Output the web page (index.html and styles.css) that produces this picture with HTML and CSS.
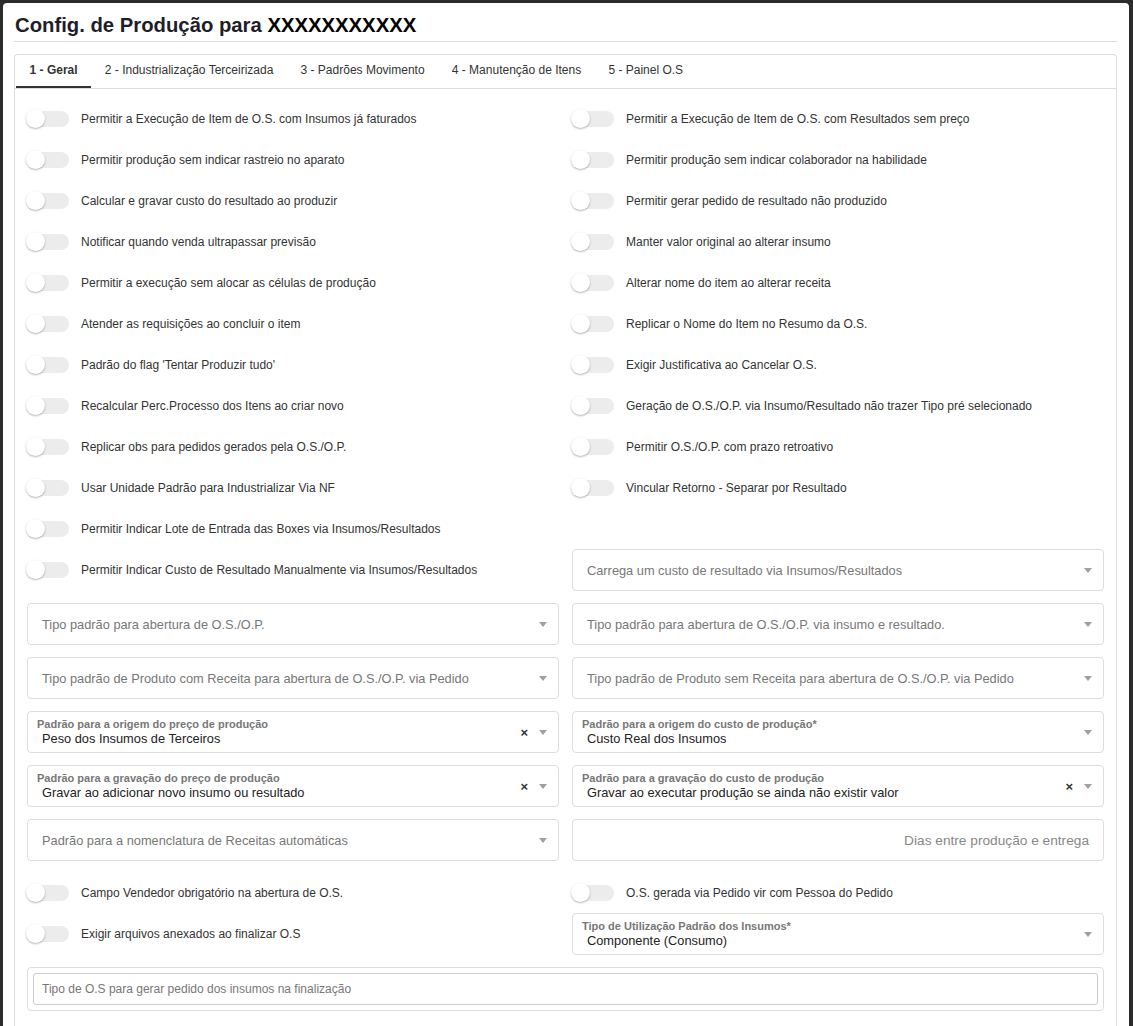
FILE: index.html
```html
<!DOCTYPE html>
<html lang="pt-BR">
<head>
    <meta charset="UTF-8">
    <meta name="viewport" content="width=device-width, initial-scale=1.0">
    <title>Config. de Produção</title>
    <link rel="stylesheet" href="styles.css">
</head>
<body>
    <div class="card">
        <h1 class="page-title">Config. de Produção para <span class="entity">XXXXXXXXXXX</span></h1>

        <div class="tabs">
            <ul class="tab-list">
                <li class="tab active">1 - Geral</li>
                <li class="tab">2 - Industrialização Terceirizada</li>
                <li class="tab">3 - Padrões Movimento</li>
                <li class="tab">4 - Manutenção de Itens</li>
                <li class="tab">5 - Painel O.S</li>
            </ul>

            <div class="tab-body">
                <!-- flags -->
                <div class="grid flags">
                    <label class="switch"><span class="track"></span><span>Permitir a Execução de Item de O.S. com Insumos já faturados</span></label>
                    <label class="switch"><span class="track"></span><span>Permitir a Execução de Item de O.S. com Resultados sem preço</span></label>

                    <label class="switch"><span class="track"></span><span>Permitir produção sem indicar rastreio no aparato</span></label>
                    <label class="switch"><span class="track"></span><span>Permitir produção sem indicar colaborador na habilidade</span></label>

                    <label class="switch"><span class="track"></span><span>Calcular e gravar custo do resultado ao produzir</span></label>
                    <label class="switch"><span class="track"></span><span>Permitir gerar pedido de resultado não produzido</span></label>

                    <label class="switch"><span class="track"></span><span>Notificar quando venda ultrapassar previsão</span></label>
                    <label class="switch"><span class="track"></span><span>Manter valor original ao alterar insumo</span></label>

                    <label class="switch"><span class="track"></span><span>Permitir a execução sem alocar as células de produção</span></label>
                    <label class="switch"><span class="track"></span><span>Alterar nome do item ao alterar receita</span></label>

                    <label class="switch"><span class="track"></span><span>Atender as requisições ao concluir o item</span></label>
                    <label class="switch"><span class="track"></span><span>Replicar o Nome do Item no Resumo da O.S.</span></label>

                    <label class="switch"><span class="track"></span><span>Padrão do flag 'Tentar Produzir tudo'</span></label>
                    <label class="switch"><span class="track"></span><span>Exigir Justificativa ao Cancelar O.S.</span></label>

                    <label class="switch"><span class="track"></span><span>Recalcular Perc.Processo dos Itens ao criar novo</span></label>
                    <label class="switch"><span class="track"></span><span>Geração de O.S./O.P. via Insumo/Resultado não trazer Tipo pré selecionado</span></label>

                    <label class="switch"><span class="track"></span><span>Replicar obs para pedidos gerados pela O.S./O.P.</span></label>
                    <label class="switch"><span class="track"></span><span>Permitir O.S./O.P. com prazo retroativo</span></label>

                    <label class="switch"><span class="track"></span><span>Usar Unidade Padrão para Industrializar Via NF</span></label>
                    <label class="switch"><span class="track"></span><span>Vincular Retorno - Separar por Resultado</span></label>

                    <label class="switch"><span class="track"></span><span>Permitir Indicar Lote de Entrada das Boxes via Insumos/Resultados</span></label>
                    <div></div>

                    <label class="switch"><span class="track"></span><span>Permitir Indicar Custo de Resultado Manualmente via Insumos/Resultados</span></label>
                    <div class="select">
                        <span class="placeholder">Carrega um custo de resultado via Insumos/Resultados</span>
                        <span class="caret"></span>
                    </div>
                </div>

                <!-- selects -->
                <div class="grid selects">
                    <div class="select">
                        <span class="placeholder">Tipo padrão para abertura de O.S./O.P.</span>
                        <span class="caret"></span>
                    </div>
                    <div class="select">
                        <span class="placeholder">Tipo padrão para abertura de O.S./O.P. via insumo e resultado.</span>
                        <span class="caret"></span>
                    </div>

                    <div class="select">
                        <span class="placeholder">Tipo padrão de Produto com Receita para abertura de O.S./O.P. via Pedido</span>
                        <span class="caret"></span>
                    </div>
                    <div class="select">
                        <span class="placeholder">Tipo padrão de Produto sem Receita para abertura de O.S./O.P. via Pedido</span>
                        <span class="caret"></span>
                    </div>

                    <div class="select filled">
                        <div class="value-wrap">
                            <span class="float-label">Padrão para a origem do preço de produção</span>
                            <span class="value">Peso dos Insumos de Terceiros</span>
                        </div>
                        <span class="clear">×</span>
                        <span class="caret"></span>
                    </div>
                    <div class="select filled">
                        <div class="value-wrap">
                            <span class="float-label">Padrão para a origem do custo de produção*</span>
                            <span class="value">Custo Real dos Insumos</span>
                        </div>
                        <span class="caret"></span>
                    </div>

                    <div class="select filled">
                        <div class="value-wrap">
                            <span class="float-label">Padrão para a gravação do preço de produção</span>
                            <span class="value">Gravar ao adicionar novo insumo ou resultado</span>
                        </div>
                        <span class="clear">×</span>
                        <span class="caret"></span>
                    </div>
                    <div class="select filled">
                        <div class="value-wrap">
                            <span class="float-label">Padrão para a gravação do custo de produção</span>
                            <span class="value">Gravar ao executar produção se ainda não existir valor</span>
                        </div>
                        <span class="clear">×</span>
                        <span class="caret"></span>
                    </div>

                    <div class="select">
                        <span class="placeholder">Padrão para a nomenclatura de Receitas automáticas</span>
                        <span class="caret"></span>
                    </div>
                    <div class="input-box">
                        <span class="placeholder">Dias entre produção e entrega</span>
                    </div>
                </div>

                <!-- bottom flags -->
                <div class="grid flags bottom">
                    <label class="switch"><span class="track"></span><span>Campo Vendedor obrigatório na abertura de O.S.</span></label>
                    <label class="switch"><span class="track"></span><span>O.S. gerada via Pedido vir com Pessoa do Pedido</span></label>

                    <label class="switch"><span class="track"></span><span>Exigir arquivos anexados ao finalizar O.S</span></label>
                    <div class="select filled">
                        <div class="value-wrap">
                            <span class="float-label">Tipo de Utilização Padrão dos Insumos*</span>
                            <span class="value">Componente (Consumo)</span>
                        </div>
                        <span class="caret"></span>
                    </div>
                </div>

                <div class="field-group">
                    <div class="text-input">Tipo de O.S para gerar pedido dos insumos na finalização</div>
                </div>
            </div>
        </div>
    </div>
</body>
</html>
```

FILE: styles.css
```css
html, body {
    height: 100%;
}

body {
    margin: 0;
    padding: 3px 4px 0 3px;
    box-sizing: border-box;
    background: #2b2b2b;
    font-family: "Liberation Sans", Arial, sans-serif;
    color: #333;
    overflow: hidden;
}

.card {
    background: #fff;
    border-radius: 4px 4px 0 0;
    padding: 10px 12px 0 11px;
    min-height: 100%;
    box-sizing: border-box;
}

.page-title {
    margin: 0;
    padding: 0 0 4px 1px;
    font-size: 20.3px;
    font-weight: bold;
    color: #1e1e2a;
    border-bottom: 1px solid #ddd;
    line-height: 24px;
}

.entity {
    color: #000;
}

.tabs {
    margin-top: 12px;
    border: 1px solid #ddd;
    border-radius: 4px 4px 0 0;
    border-bottom: none;
    min-height: 980px;
}

.tab-list {
    list-style: none;
    margin: 0;
    padding: 0 0 0 1px;
    display: flex;
    border-bottom: 1px solid #ddd;
}

.tab {
    padding: 0 13.6px;
    font-size: 12px;
    line-height: 31px;
    border-bottom: 2px solid transparent;
    color: #333;
}

.tab.active {
    font-weight: bold;
    border-bottom-color: #333;
}

.tab-body {
    padding: 9px 12px 0 12px;
}

.grid {
    display: grid;
    grid-template-columns: 1fr 1fr;
    column-gap: 13px;
}

.flags {
    align-items: center;
}

.switch {
    display: flex;
    align-items: center;
    height: 41px;
    font-size: 12px;
    color: #333;
}

.track {
    position: relative;
    flex: none;
    width: 42px;
    height: 16px;
    margin-right: 12px;
    border-radius: 8px;
    background: #ececec;
}

.track::before {
    content: "";
    position: absolute;
    left: -1px;
    top: -2px;
    width: 19px;
    height: 19px;
    border-radius: 50%;
    background: #fff;
    box-shadow: 0 1px 2px rgba(0, 0, 0, 0.3);
}

.select,
.input-box {
    display: flex;
    align-items: center;
    height: 42px;
    box-sizing: border-box;
    border: 1px solid #ddd;
    border-radius: 4px;
    padding: 0 11px 0 14px;
}

.selects {
    margin-top: 12px;
    row-gap: 12px;
}

.placeholder {
    flex: 1;
    font-size: 12.8px;
    color: #777;
    white-space: nowrap;
}

.caret {
    flex: none;
    width: 0;
    height: 0;
    border-left: 4px solid transparent;
    border-right: 4px solid transparent;
    border-top: 5px solid #a0a0a0;
}

.select.filled {
    padding-left: 9px;
}

.value-wrap {
    flex: 1;
    display: flex;
    flex-direction: column;
    padding-top: 1px;
}

.float-label {
    font-size: 11px;
    font-weight: bold;
    color: #777;
    line-height: 13px;
}

.value {
    font-size: 12.8px;
    color: #222;
    line-height: 16px;
    padding-left: 5px;
}

.clear {
    font-size: 13px;
    font-weight: bold;
    color: #333;
    margin-right: 11px;
}

.input-box .placeholder {
    text-align: right;
    font-size: 13.7px;
    color: #888;
    padding-right: 3px;
}

.bottom {
    margin-top: 11px;
}

.field-group {
    margin-top: 12px;
    border: 1px solid #ddd;
    border-radius: 4px;
    padding: 5px;
}

.text-input {
    height: 32px;
    box-sizing: border-box;
    border: 1px solid #ccc;
    border-radius: 3px;
    padding: 0 8px;
    font-size: 12px;
    line-height: 30px;
    color: #777;
}
```
